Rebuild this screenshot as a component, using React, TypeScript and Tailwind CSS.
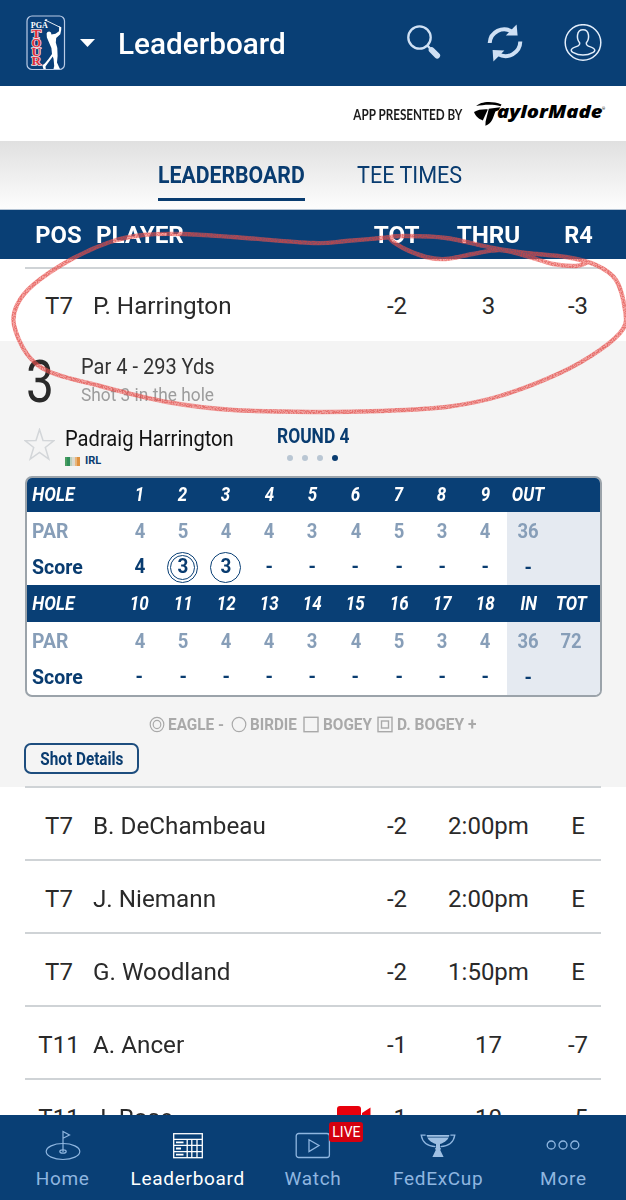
import React from 'react';
import clsx from 'clsx';

interface Player {
  pos: string;
  name: string;
  tot: string;
  thru: string;
  round: string;
  live?: boolean;
}

interface Nine {
  holes: string[];
  par: string[];
  score: string[];
}

const featured: Player = { pos: 'T7', name: 'P. Harrington', tot: '-2', thru: '3', round: '-3' };

const players: Player[] = [
  { pos: 'T7', name: 'B. DeChambeau', tot: '-2', thru: '2:00pm', round: 'E' },
  { pos: 'T7', name: 'J. Niemann', tot: '-2', thru: '2:00pm', round: 'E' },
  { pos: 'T7', name: 'G. Woodland', tot: '-2', thru: '1:50pm', round: 'E' },
  { pos: 'T11', name: 'A. Ancer', tot: '-1', thru: '17', round: '-7' },
  { pos: 'T11', name: 'J. Rose', tot: '-1', thru: '10', round: '-5', live: true },
];

const nines: Nine[] = [
  {
    holes: ['1', '2', '3', '4', '5', '6', '7', '8', '9', 'OUT', ''],
    par: ['4', '5', '4', '4', '3', '4', '5', '3', '4', '36', ''],
    score: ['4', '3', '3', '-', '-', '-', '-', '-', '-', '-', ''],
  },
  {
    holes: ['10', '11', '12', '13', '14', '15', '16', '17', '18', 'IN', 'TOT'],
    par: ['4', '5', '4', '4', '3', '4', '5', '3', '4', '36', '72'],
    score: ['-', '-', '-', '-', '-', '-', '-', '-', '-', '-', ''],
  },
];

// Squeezes Roboto to condensed proportions
const Condensed: React.FC<{ className?: string; children: React.ReactNode }> = ({
  className = 'scale-x-[0.88]',
  children,
}) => <span className={clsx('inline-block whitespace-nowrap', className)}>{children}</span>;

const TourLogo = () => (
  <svg width="40" height="56" viewBox="0 0 40 56">
    <rect x="1" y="1" width="37.5" height="53.5" rx="5" fill="#0a3f78" stroke="#b9cbe6" strokeWidth="1.2" />
    <text x="4.8" y="12.8" fontFamily="'Liberation Serif', serif" fontWeight="bold" fontSize="7.4" fill="#fff" textLength="17" lengthAdjust="spacingAndGlyphs">PGA</text>
    {['T', 'O', 'U', 'R'].map((c, i) => (
      <text
        key={c}
        x="5.5"
        y={22.8 + i * 8.9}
        fontFamily="'Liberation Serif', serif"
        fontWeight="bold"
        fontSize="12"
        fill="#dd2f3c"
        stroke="#f3dfe6"
        strokeWidth="1.4"
        paintOrder="stroke"
        textLength="9.6"
        lengthAdjust="spacingAndGlyphs"
      >
        {c}
      </text>
    ))}
    <path d="M19.5 5.2 L34.5 12.5" stroke="#fff" strokeWidth="0.9" />
    <path d="M18.5 5.8 Q18.6 4 21.4 4.4 L20.4 6.2 Z" fill="#fff" />
    <path
      d="M33.2 11.3 L35.3 12.2 L35.2 15 L34.3 19.3 L30.2 23 L29.8 27.5 L31.3 33 L31.6 41 L31 47.5 L33 52 L34 54 L27.5 54 L28.2 51 L27.6 44 L26.8 41.5 L22 48 L19.5 51.5 L19.8 54 L17.4 54 L16.4 50.2 L18.8 48.6 L22.5 44 L26 39 L25.4 33 L22.6 26.5 L20.9 22.6 L20.6 18.4 Q21 16.6 23.2 16.6 L25 17.4 L25.4 19.5 L29.5 18.8 L33 16.3 Z"
      fill="#fff"
    />
  </svg>
);

const SearchIcon = () => (
  <svg width="34" height="36" viewBox="0 0 34 36" fill="none">
    <circle cx="12.5" cy="12.5" r="11.2" stroke="#cfe0f4" strokeWidth="2.3" />
    <path d="M20 20 L24 24.5" stroke="#cfe0f4" strokeWidth="2.4" />
    <path d="M24.6 25 L30.2 30.6" stroke="#cfe0f4" strokeWidth="5.8" strokeLinecap="round" />
  </svg>
);

const RefreshIcon = () => (
  <svg width="36" height="38" viewBox="0 0 36 38" fill="none">
    <path d="M2.7 19 A14.5 14.5 0 0 1 25 7.6" stroke="#cfe0f4" strokeWidth="4" />
    <path d="M33.3 17.5 A14.8 14.8 0 0 1 11 30" stroke="#cfe0f4" strokeWidth="4" />
    <path d="M29.6 0.5 L30.6 11.6 L18.8 11.4 Z" fill="#cfe0f4" />
    <path d="M6.4 37.5 L5.6 26 L17.4 26.4 Z" fill="#cfe0f4" />
  </svg>
);

const ProfileIcon = () => (
  <svg width="38" height="38" viewBox="0 0 38 38" fill="none" stroke="#e3eefb" strokeWidth="1.5">
    <circle cx="19" cy="18.5" r="17.8" />
    <path d="M15.6 18.7 C12.4 15 12.2 5.7 19 5.7 C25.8 5.7 25.6 15 22.4 18.7 C21.8 21.1 23.2 21.8 25.8 22.6 C29 23.6 30.8 24.5 30.8 26.3 C30.8 27.7 29.8 28.1 28.6 28.7 C23 31.9 15 31.9 9.4 28.7 C8.2 28.1 7.2 27.7 7.2 26.3 C7.2 24.5 9 23.6 12.2 22.6 C14.8 21.8 16.2 21.1 15.6 18.7 Z" />
  </svg>
);

const SponsorLogo = () => (
  <svg width="134" height="28" viewBox="0 0 134 28">
    <path d="M2.2 6 C6 1.8 17 0.2 27.5 4.4 L26.6 6.2 C18 3.6 9 4.8 2.2 6 Z" fill="#000" />
    <path d="M0 12 C4 9.8 8 9.2 13.8 9.4 L8.8 20.4 C5 19 2 16.8 0 12 Z" fill="#000" />
    <path d="M14.8 8.7 L26.4 7.2 L24.6 10.2 L21.4 11.6 C19 18 18 23.6 11.4 25.8 L11.6 21.5 Z" fill="#000" />
    <text x="23" y="17.8" fontFamily="'Open Sans', sans-serif" fontWeight="800" fontStyle="italic" fontSize="16.8" textLength="105.5" lengthAdjust="spacingAndGlyphs">aylorMade</text>
    <text x="128" y="9.5" fontFamily="Roboto, sans-serif" fontSize="4">®</text>
  </svg>
);

const HomeIcon = () => (
  <svg width="36" height="32" viewBox="0 0 36 32" fill="none" stroke="#8fb6e0" strokeWidth="1.2">
    <ellipse cx="18" cy="21.5" rx="16.8" ry="8" />
    <ellipse cx="18" cy="21.5" rx="3.2" ry="1.7" />
    <path d="M18 22 V1.5 L24.5 5 L18 8.2" />
  </svg>
);

const BoardIcon = () => (
  <svg width="32" height="28" viewBox="0 0 32 28" fill="none" stroke="#fff" strokeWidth="1.3">
    <rect x="1.7" y="1.7" width="28.6" height="24" />
    <path d="M2 7.4 H30 M2 13.4 H30 M2 19.6 H30 M15.2 7.4 V25.6 M19.8 7.4 V25.6 M25 7.4 V25.6" />
    <path d="M4 10.4 H11.5 M4 16.5 H9 M4 22.6 H11.5" strokeWidth="1.8" />
  </svg>
);

const WatchIcon = () => (
  <svg width="36" height="28" viewBox="0 0 36 28" fill="none" stroke="#8fb6e0" strokeWidth="1.3">
    <rect x="1.2" y="1.5" width="33.2" height="24" rx="2.5" />
    <path d="M14 7.8 L24 13.5 L14 19.6 Z" />
  </svg>
);

const CupIcon = () => (
  <svg width="36" height="28" viewBox="0 0 36 28">
    <path d="M5.6 3.2 H1.2 C2.4 10.5 7.5 14.4 15.5 14.6 M30.4 3.2 H34.8 C33.6 10.5 28.5 14.4 20.5 14.6" stroke="#8fb6e0" strokeWidth="1.3" fill="none" />
    <path d="M6.6 3 H29.4 C28.8 7.4 25 10.6 20 12 L20 15.6 L21 16.8 L20.2 18 L23.6 25 H12.4 L15.8 18 L15 16.8 L16 15.6 L16 12 C11 10.6 7.2 7.4 6.6 3 Z" fill="#9fc0e3" />
    <path d="M7 5.2 H29" stroke="#093f75" strokeWidth="0.7" />
  </svg>
);

const MoreIcon = () => (
  <svg width="34" height="12" viewBox="0 0 34 12" fill="none" stroke="#8fb6e0" strokeWidth="1.3">
    <circle cx="5.2" cy="5" r="4" />
    <circle cx="17" cy="5" r="4" />
    <circle cx="28.8" cy="5" r="4" />
  </svg>
);

const PlayerRow: React.FC<{ player: Player; className?: string }> = ({ player, className }) => (
  <div
    className={clsx(
      'grid grid-cols-[58px_264px_90px_93px_86px] items-center pl-[30px] h-[72px] text-2xl text-[#2a2a2a] shrink-0',
      className,
    )}
  >
    <span className="text-center">{player.pos}</span>
    <span className="flex items-center justify-between pl-[5px]">
      <Condensed className="origin-left scale-x-[1.01]">{player.name}</Condensed>
      {player.live && (
        <svg width="36" height="23" viewBox="0 0 36 23" className="-mr-5 shrink-0">
          <rect x="1" width="24" height="23" rx="3" fill="#e8000c" />
          <path d="M26 7 L34.5 1.5 V21.5 L26 16 Z" fill="#e8000c" />
        </svg>
      )}
    </span>
    <span className="text-center">{player.tot}</span>
    <span className="text-center">{player.thru}</span>
    <span className="text-center">{player.round}</span>
  </div>
);

const HoleHeader: React.FC<{ holes: string[]; className: string }> = ({ holes, className }) => (
  <div className={clsx('grid grid-cols-[91px_repeat(11,43.2px)] items-center bg-[#093f75] text-white text-[20px] font-bold italic', className)}>
    <Condensed className="origin-left scale-x-[0.87] pl-[6px]">HOLE</Condensed>
    {holes.map((h, i) => (
      <span key={i} className="text-center">
        <Condensed className="scale-x-[0.85]">{h}</Condensed>
      </span>
    ))}
  </div>
);

const ScoreMark: React.FC<{ value: string; par: string }> = ({ value, par }) => {
  const diff = value === '-' || value === '' ? 0 : Number(value) - Number(par);
  return (
    <span
      className={clsx(
        'flex size-[31px] items-center justify-center rounded-full border-[#093f75]',
        diff < 0 && 'border',
      )}
    >
      <span
        className={clsx(
          'flex size-[25px] items-center justify-center rounded-full border-[#093f75]',
          diff < -1 && 'border',
        )}
      >
        <Condensed className="scale-x-[0.9]">{value}</Condensed>
      </span>
    </span>
  );
};

const NineBody: React.FC<{ nine: Nine; className: string }> = ({ nine, className }) => (
  <div className={clsx('grid grid-cols-[91px_repeat(9,43.2px)_1fr] text-[21px] font-bold', className)}>
    <div className="flex flex-col pl-[5px]">
      <span className="h-[38px] leading-[38px] text-[#879eb8]">
        <Condensed className="origin-left scale-x-[0.92]">PAR</Condensed>
      </span>
      <span className="h-[34px] leading-[35px] text-[#093c70]">
        <Condensed className="origin-left scale-x-[0.93]">Score</Condensed>
      </span>
    </div>
    {nine.par.slice(0, 9).map((p, i) => (
      <div key={i} className="flex flex-col items-center">
        <span className="h-[38px] leading-[38px] text-[#879eb8]">
          <Condensed>{p}</Condensed>
        </span>
        <span className="flex h-[34px] items-center text-[#093c70]">
          <ScoreMark value={nine.score[i]} par={p} />
        </span>
      </div>
    ))}
    <div className="flex bg-[#e5eaf1]">
      {[9, 10].map((i) => (
        <div key={i} className="flex w-[43.2px] flex-col items-center">
          <span className="h-[38px] leading-[38px] text-[#879eb8]">
            <Condensed>{nine.par[i]}</Condensed>
          </span>
          <span className="h-[34px] leading-[35px] text-[#093c70]">
            <Condensed className="scale-x-[0.9]">{nine.score[i]}</Condensed>
          </span>
        </div>
      ))}
    </div>
  </div>
);

// Catmull-Rom spline through the given points
const spline = (pts: number[][]) =>
  pts.slice(0, -1).reduce((d, p, i) => {
    const p0 = pts[i - 1] ?? p;
    const p2 = pts[i + 1];
    const p3 = pts[i + 2] ?? p2;
    return `${d} C${p[0] + (p2[0] - p0[0]) / 6} ${p[1] + (p2[1] - p0[1]) / 6} ${p2[0] - (p3[0] - p[0]) / 6} ${p2[1] - (p3[1] - p[1]) / 6} ${p2[0]} ${p2[1]}`;
  }, `M${pts[0][0]} ${pts[0][1]}`);

const scribble = [
  [586, 263], [576, 266], [553, 264], [526, 256], [500, 250], [473, 254], [446, 259], [426, 257],
  [403, 248], [390, 238], [406, 236], [446, 238], [493, 248], [526, 253], [566, 257], [596, 265],
  [616, 280], [625, 310], [623, 329], [600, 350], [560, 373], [500, 396], [446, 407], [380, 411],
  [313, 412], [233, 410], [167, 402], [100, 386], [50, 372], [27, 354], [14, 325], [17, 305],
  [33, 285], [70, 260], [110, 242], [143, 235], [183, 234], [233, 237], [313, 243], [346, 241], [392, 237],
];

const Scribble = () => (
  <svg className="pointer-events-none absolute left-0 top-0" width="626" height="440" fill="none">
    <defs>
      <filter id="chalk" x="0" y="0" width="626" height="440" filterUnits="userSpaceOnUse">
        <feTurbulence type="fractalNoise" baseFrequency="0.8" numOctaves="2" seed="4" result="noise" />
        <feColorMatrix in="noise" type="matrix" values="0 0 0 0 0  0 0 0 0 0  0 0 0 0 0  0 0 0 -5 3" result="grain" />
        <feComposite in="SourceGraphic" in2="grain" operator="in" />
      </filter>
    </defs>
    <path d={spline(scribble)} stroke="#ee5a55" strokeOpacity="0.55" strokeWidth="4.4" strokeLinecap="round" />
    <path d={spline(scribble)} stroke="#d9423e" strokeOpacity="0.5" strokeWidth="3.8" strokeLinecap="round" filter="url(#chalk)" />
  </svg>
);

const tabs = [
  { label: 'Home', icon: <HomeIcon /> },
  { label: 'Leaderboard', icon: <BoardIcon />, active: true },
  { label: 'Watch', icon: <WatchIcon />, live: true },
  { label: 'FedExCup', icon: <CupIcon /> },
  { label: 'More', icon: <MoreIcon /> },
];

const App = () => {
  return (
    <div className="relative flex h-[1200px] w-[626px] flex-col overflow-hidden bg-white font-[Roboto,sans-serif]">
      {/* App bar */}
      <header className="flex h-[86px] shrink-0 items-center bg-[#093f75] pl-[25.5px] pr-[24px]">
        <TourLogo />
        <svg width="15" height="8" viewBox="0 0 15 8" className="ml-[14px]">
          <path d="M0 0 H15 L7.5 8 Z" fill="#fff" />
        </svg>
        <h1 className="ml-[23px] pt-[3px] text-[29px] font-medium leading-none text-white">
          <Condensed className="origin-left scale-x-[1.025]">Leaderboard</Condensed>
        </h1>
        <div className="ml-auto flex items-center">
          <SearchIcon />
          <div className="ml-[46px] mr-[41px]">
            <RefreshIcon />
          </div>
          <ProfileIcon />
        </div>
      </header>

      {/* Sponsor */}
      <div className="flex h-[55px] shrink-0 items-center justify-end pr-[18px]">
        <span className="font-[Lato,sans-serif] text-[16px] font-bold text-[#1c1c1c]">
          <Condensed className="origin-right scale-x-[0.73]">APP PRESENTED BY</Condensed>
        </span>
        <span className="ml-[12px]">
          <SponsorLogo />
        </span>
      </div>

      {/* Tabs */}
      <div className="flex h-[69px] shrink-0 bg-linear-to-b from-[#e0e0e0] to-[#fdfdfd] pl-[158px] text-2xl text-[#093c70] border-b border-[#b5c4d4]">
        <div className="mt-[10px] flex h-[50px] w-[147px] items-center border-b-[3px] border-[#093c70] font-bold">
          <Condensed className="origin-left scale-x-[0.885]">LEADERBOARD</Condensed>
        </div>
        <div className="mt-[10px] ml-[52px] flex h-[47px] items-center">
          <Condensed className="origin-left scale-x-[0.9]">TEE TIMES</Condensed>
        </div>
      </div>

      {/* Column titles */}
      <div className="grid h-[49px] shrink-0 grid-cols-[58px_264px_90px_93px_86px] items-center bg-[#093f75] pl-[30px] pt-px text-2xl font-bold text-white">
        <span className="pr-[2px] text-center">
          <Condensed className="scale-x-[0.99]">POS</Condensed>
        </span>
        <span className="pl-[8px]">
          <Condensed className="origin-left scale-x-[1.01]">PLAYER</Condensed>
        </span>
        <span className="text-center">
          <Condensed className="scale-x-[1.01]">TOT</Condensed>
        </span>
        <span className="text-center">
          <Condensed className="scale-x-[1.01]">THRU</Condensed>
        </span>
        <span className="pl-[2px] text-center">
          <Condensed className="scale-x-[0.98]">R4</Condensed>
        </span>
      </div>

      <div className="mx-[25px] mt-[8px] h-[2px] shrink-0 bg-[#cfd3d6]" />
      <PlayerRow player={featured} className="pt-[2px]" />

      {/* Expanded scorecard */}
      <section className="flex h-[446px] shrink-0 flex-col bg-[#f4f4f4]">
        <div className="flex h-[72px] items-center pl-[26px]">
          <span className="w-[55px] text-[60px] leading-none text-[#2a2a2a] pt-[10px]">
            <Condensed className="origin-left scale-x-[0.83]">3</Condensed>
          </span>
          <div className="flex flex-col pt-[8px]">
            <span className="h-[28px] text-[22px] leading-[28px] text-[#333]">
              <Condensed className="origin-left scale-x-[0.91]">Par 4 - 293 Yds</Condensed>
            </span>
            <span className="h-[28px] text-[19px] leading-[28px] text-[#9c9c9c]">
              <Condensed className="origin-left scale-x-[0.91]">Shot 3 in the hole</Condensed>
            </span>
          </div>
        </div>

        <div className="flex h-[63px] pl-[24px] pt-[10px]">
          <svg width="31" height="33" viewBox="0 0 31 33" className="mt-[5px]" fill="none" stroke="#d3d6d9" strokeWidth="1.5">
            <path d="M15.5 1.5 L19 12.5 L30 12.7 L21.3 19.5 L24.8 31 L15.5 24.3 L6.2 31 L9.7 19.5 L1 12.7 L12 12.5 Z" />
          </svg>
          <div className="ml-[10px] w-[212px]">
            <div className="h-[29px] text-[22px] leading-[31px] text-[#111]">
              <Condensed className="origin-left scale-x-[0.915]">Padraig Harrington</Condensed>
            </div>
            <div className="flex h-[18px] items-center">
              <div className="flex h-[9px] w-[15px]">
                <div className="w-[2px] bg-[#4a9d5f]" />
                <div className="w-[3px] bg-[#2f8f5a]" />
                <div className="w-[2px] bg-[#b9cfbd]" />
                <div className="w-[3px] bg-[#dcd9cf]" />
                <div className="w-[2px] bg-[#e8b57c]" />
                <div className="w-[3px] bg-[#df9240]" />
              </div>
              <span className="ml-[5px] text-[11px] font-bold text-[#093c70]">IRL</span>
            </div>
          </div>
          <div className="pt-px">
            <div className="h-[26px] text-[20px] font-bold leading-[25px] text-[#093c70]">
              <Condensed className="origin-left scale-x-[0.87]">ROUND 4</Condensed>
            </div>
            <div className="mt-[5px] flex gap-[9px] pl-[10px]">
              <span className="size-[6px] rounded-full bg-[#b9c6d3]" />
              <span className="size-[6px] rounded-full bg-[#b9c6d3]" />
              <span className="size-[6px] rounded-full bg-[#b9c6d3]" />
              <span className="size-[6px] rounded-full bg-[#093c70]" />
            </div>
          </div>
        </div>

        <div className="mx-[25px] h-[221px] w-[577px] shrink-0 overflow-hidden rounded-[7px] border-2 border-[#9ba3aa] bg-white">
          <HoleHeader holes={nines[0].holes} className="h-[34px] pb-[2px]" />
          <NineBody nine={nines[0]} className="h-[73px]" />
          <HoleHeader holes={nines[1].holes} className="h-[37px] pb-px" />
          <NineBody nine={nines[1]} className="h-[73px]" />
        </div>

        {/* Legend */}
        <div className="mt-[17px] flex h-[22px] items-center pl-[149px] text-[16px] font-bold text-[#a9a9a9]">
          <svg width="16" height="20" viewBox="0 0 16 20" fill="none" stroke="#a9a9a9" strokeWidth="1.2">
            <ellipse cx="8" cy="9.5" rx="6.8" ry="7.2" />
            <ellipse cx="8" cy="9.5" rx="3.8" ry="4.1" />
          </svg>
          <span className="ml-[3px] w-[60px]"><Condensed className="origin-left scale-x-[0.96]">EAGLE -</Condensed></span>
          <svg width="16" height="20" viewBox="0 0 16 20" fill="none" stroke="#a9a9a9" strokeWidth="1.2" className="ml-[3px]">
            <ellipse cx="8" cy="9.5" rx="6.8" ry="7.2" />
          </svg>
          <span className="ml-[3px] w-[51px]"><Condensed className="origin-left scale-x-[0.95]">BIRDIE</Condensed></span>
          <svg width="16" height="20" viewBox="0 0 16 20" fill="none" stroke="#a9a9a9" strokeWidth="1.4" className="ml-[2px]">
            <rect x="1" y="2.3" width="14" height="14.4" />
          </svg>
          <span className="ml-[4px] w-[52px]"><Condensed className="origin-left scale-x-[0.96]">BOGEY</Condensed></span>
          <svg width="16" height="20" viewBox="0 0 16 20" fill="none" stroke="#a9a9a9" strokeWidth="1.4" className="ml-[2px]">
            <rect x="1" y="2.3" width="14" height="14.4" />
            <rect x="4.5" y="6" width="7" height="7" />
          </svg>
          <span className="ml-[4px]"><Condensed className="origin-left scale-x-[0.97]">D. BOGEY +</Condensed></span>
        </div>

        <button className="ml-[24px] mt-[7px] h-[31px] w-[115px] rounded-[7px] border-2 border-[#1d4d7e] text-[18px] font-bold leading-none text-[#093c70]">
          <Condensed className="scale-x-[0.85]">Shot Details</Condensed>
        </button>
      </section>

      {/* Rest of the field */}
      {players.map((p) => (
        <React.Fragment key={p.name}>
          <div className="relative mx-[25px] -mt-px h-[2px] shrink-0 bg-[#cfd3d6]" />
          <PlayerRow player={p} className="pt-[3px]" />
        </React.Fragment>
      ))}

      <Scribble />

      {/* Bottom navigation */}
      <nav className="absolute inset-x-0 bottom-0 grid h-[85px] grid-cols-5 bg-[#093f75]">
        {tabs.map((t) => (
          <div key={t.label} className="relative flex flex-col items-center">
            <div className="mt-[13px] flex h-[36px] items-center">{t.icon}</div>
            <span className={clsx('mt-[2px] text-[19px] leading-[26px] tracking-[0.7px]', t.active ? 'text-white' : 'text-[#8fb6e0]')}>
              {t.label}
            </span>
            {t.live && (
              <span className="absolute left-[79px] top-[7px] flex h-[20px] w-[34px] items-center justify-center rounded-[3px] bg-[#d4000f] text-[14px] leading-none text-white">
                LIVE
              </span>
            )}
          </div>
        ))}
      </nav>
    </div>
  );
};

export default App;
